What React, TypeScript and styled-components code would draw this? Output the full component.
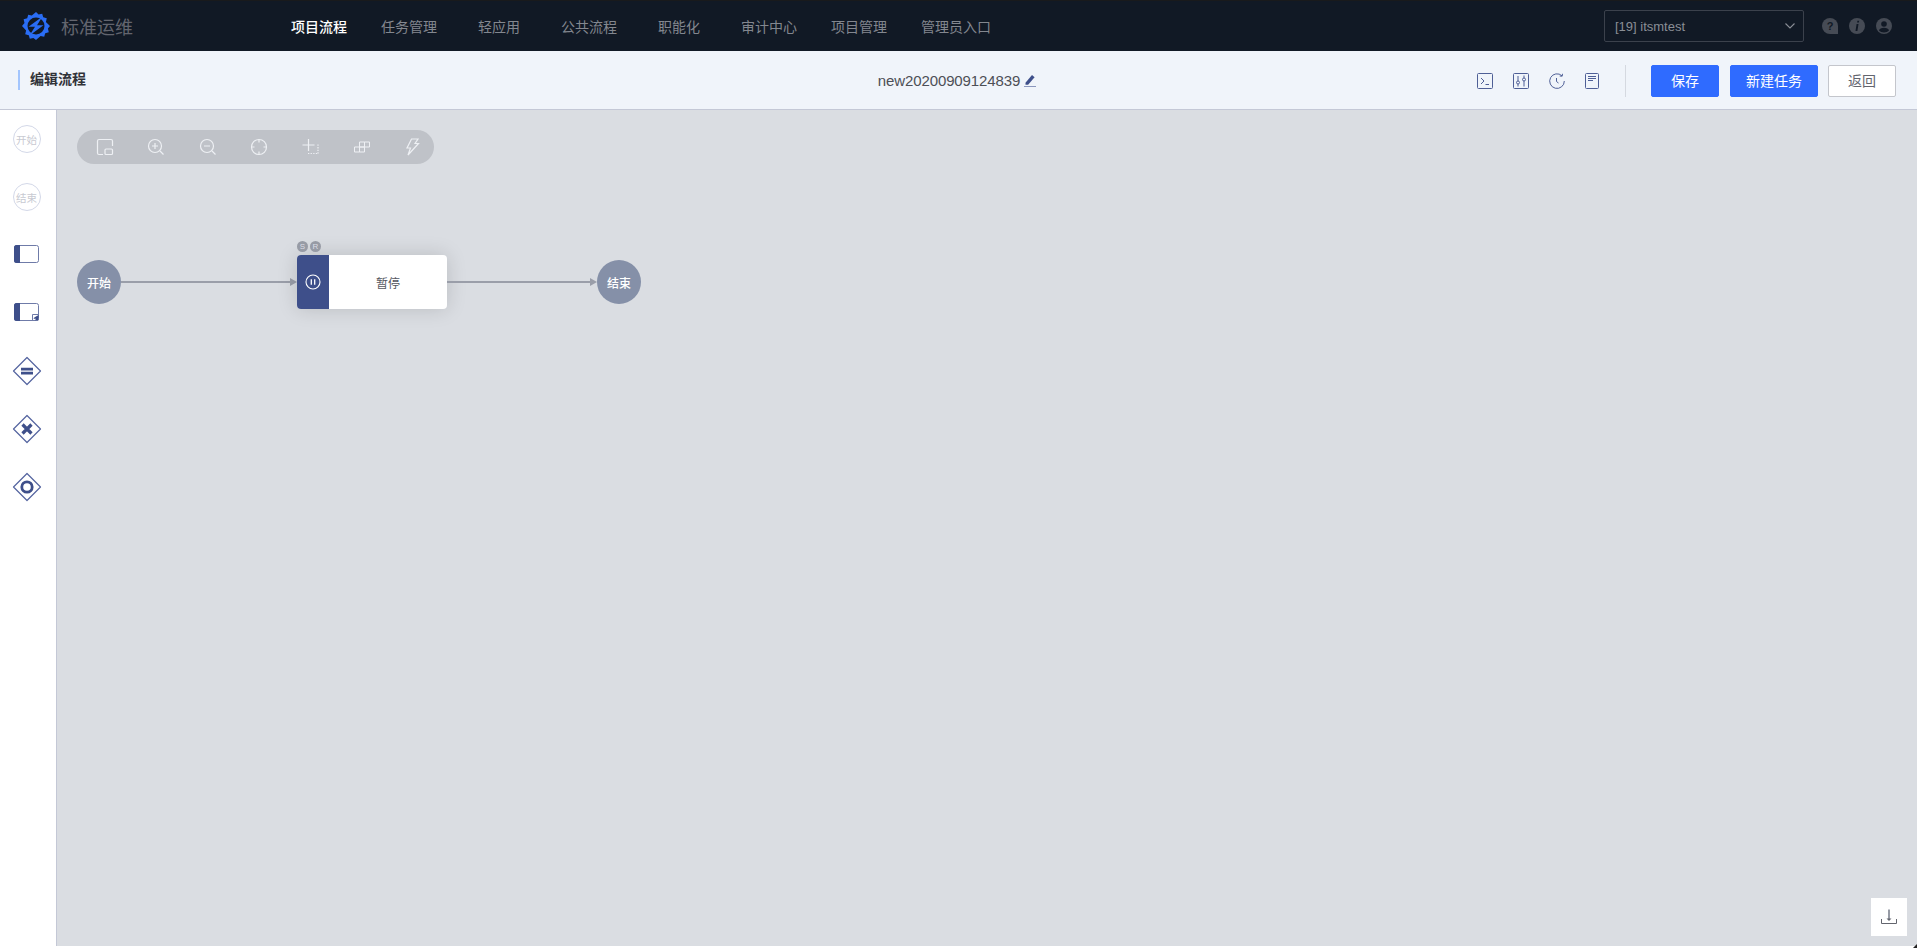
import React from "react";
import styled, { createGlobalStyle } from "styled-components";

const Global = createGlobalStyle`
  html, body { margin: 0; padding: 0; height: 100%; overflow: hidden; background: #fff; }
  #root { height: 100%; }
  * { box-sizing: border-box; }
  body { font-family: "Liberation Sans", "Noto Sans CJK SC", sans-serif; }
`;

const Page = styled.div`
  position: relative;
  width: 1917px;
  height: 948px;
  display: flex;
  flex-direction: column;
  background: #fff;
  padding-bottom: 2px;
  &::after {
    content: "";
    position: absolute;
    right: 0;
    bottom: 0;
    border-style: solid;
    border-width: 0 0 4px 4px;
    border-color: transparent transparent #222 transparent;
  }
`;
const TopBar = styled.header`
  height: 51px;
  flex: none;
  display: flex;
  align-items: center;
  background: #111925;
  border-top: 1px solid #191a1c;
  padding-left: 21px;
`;
const Brand = styled.div`
  width: 253px;
  display: flex;
  align-items: center;
  gap: 10px;
  font-size: 18px;
  color: #63656e;
`;
const Nav = styled.nav`
  display: flex;
  height: 100%;
  flex: 1;
`;
const NavItem = styled.a<{ $active?: boolean }>`
  min-width: 90px;
  padding: 0 17px;
  display: flex;
  align-items: center;
  justify-content: center;
  font-size: 14px;
  font-weight: ${(p) => (p.$active ? 500 : 400)};
  color: ${(p) => (p.$active ? "#ffffff" : "#83878f")};
`;
const ProjectSelect = styled.div`
  width: 200px;
  height: 32px;
  border: 1px solid #3b414c;
  border-radius: 2px;
  display: flex;
  align-items: center;
  justify-content: space-between;
  padding: 0 3px 0 10px;
  font-size: 13px;
  color: #8a8e96;
  font-family: "Liberation Sans", sans-serif;
`;
const HeaderIcons = styled.div`
  display: flex;
  gap: 11px;
  margin: 0 25px 0 18px;
`;
const SubBar = styled.div`
  height: 59px;
  flex: none;
  display: grid;
  grid-template-columns: 1fr auto 1fr;
  align-items: center;
  background: #f0f4fa;
  border-bottom: 1px solid #c4c8d6;
  padding: 0 21px 0 18px;
`;
const PageTitle = styled.h1`
  margin: 0;
  border-left: 2px solid #a3c5fd;
  height: 20px;
  line-height: 18px;
  padding-left: 10px;
  font-size: 14px;
  font-weight: 700;
  color: #313238;
`;
const FlowName = styled.div`
  display: flex;
  align-items: center;
  gap: 4px;
  font-size: 15px;
  letter-spacing: -0.12px;
  color: #4d4f56;
`;
const Actions = styled.div`
  display: flex;
  align-items: center;
  justify-content: flex-end;
  margin-top: 2px;
`;
const ToolIcons = styled.div`
  display: flex;
  align-items: center;
  gap: 20px;
  padding-right: 26px;
  margin-right: 25px;
  height: 32px;
  border-right: 1px solid #d5d9e0;
`;
const Button = styled.button<{ $primary?: boolean; $w: number; $gap: number }>`
  width: ${(p) => p.$w}px;
  height: 32px;
  margin-left: ${(p) => p.$gap}px;
  border-radius: 2px;
  border: 1px solid ${(p) => (p.$primary ? "#2f6bff" : "#c4c6cc")};
  background: ${(p) => (p.$primary ? "#2f6bff" : "#ffffff")};
  color: ${(p) => (p.$primary ? "#ffffff" : "#63656e")};
  font-family: inherit;
  font-size: 14px;
  padding: 0 0 2px;
`;
const Body = styled.div`
  flex: 1;
  display: flex;
  min-height: 0;
`;
const Palette = styled.aside`
  width: 57px;
  flex: none;
  background: #fff;
  border-right: 1px solid #c4c8d6;
  display: flex;
  flex-direction: column;
`;
const PaletteItem = styled.div<{ $lift?: boolean }>`
  height: 58px;
  flex: none;
  display: flex;
  align-items: center;
  justify-content: center;
  padding-right: 3px;
  padding-bottom: ${(p) => (p.$lift ? 2 : 0)}px;
`;
const EventShape = styled.div`
  width: 28px;
  height: 28px;
  border-radius: 50%;
  border: 1px solid #d3d8e8;
  display: flex;
  align-items: center;
  justify-content: center;
  font-size: 10.5px;
  color: #c8cad2;
  white-space: nowrap;
`;
const Canvas = styled.main`
  position: relative;
  flex: 1;
  background: #dadde2;
`;
const CanvasTools = styled.div`
  position: absolute;
  left: 20px;
  top: 20px;
  width: 357px;
  height: 34px;
  border-radius: 17px;
  background: #bfc2c8;
  display: flex;
  align-items: center;
  padding-left: 18px;
  gap: 31.4px;
`;
const Node = styled.div<{ $x: number }>`
  position: absolute;
  left: ${(p) => p.$x}px;
  top: 150px;
  width: 44px;
  height: 44px;
  border-radius: 50%;
  background: #8590a8;
  color: #fff;
  font-size: 12px;
  font-weight: 500;
  display: flex;
  align-items: center;
  justify-content: center;
`;
const Connector = styled.div<{ $x: number }>`
  position: absolute;
  left: ${(p) => p.$x}px;
  top: 166px;
  height: 12px;
  line-height: 0;
  svg { display: block; }
`;
const TaskNode = styled.div`
  position: absolute;
  left: 240px;
  top: 145px;
  width: 150px;
  height: 54px;
  border-radius: 4px;
  background: #fff;
  box-shadow: 0 0 20px rgba(0, 0, 0, 0.15);
  display: flex;
`;
const TaskIcon = styled.div`
  width: 32px;
  flex: none;
  background: #3e4f8a;
  border-radius: 4px 0 0 4px;
  display: flex;
  align-items: center;
  justify-content: center;
`;
const TaskLabel = styled.div`
  flex: 1;
  display: flex;
  align-items: center;
  justify-content: center;
  font-size: 12px;
  color: #55575f;
`;
const Badges = styled.div`
  position: absolute;
  left: 0;
  top: -14px;
  display: flex;
  gap: 2px;
`;
const Badge = styled.span`
  width: 11px;
  height: 11px;
  border-radius: 50%;
  background: #979ba5;
  color: #dcdee5;
  font-size: 8px;
  line-height: 11px;
  text-align: center;
`;
const Download = styled.button`
  position: absolute;
  right: 10px;
  bottom: 10px;
  width: 36px;
  height: 38px;
  border: 0;
  padding: 0;
  background: #fff;
  display: flex;
  align-items: center;
  justify-content: center;
`;

const BLUE = "#3e4f8a";
const LINE = "#4f5f96";
const WHITE = "#eef0f4";

const Logo = () => (
  <svg width="30" height="30" viewBox="0 0 30 30">
    <path
      fill="#2a6df5"
      d="M15 1l2.600 2.600 3.600-.9 1 3.600 3.600 1-.9 3.600L29 15l-2.100 2.400.9 3.800-3.600 1-1 3.600-3.600-.9L15 29l-2.600-2.100-3.600.9-1-3.600-3.600-1 .9-3.800L1 15l2.500-2.900-.9-3.800 3.600-1 1-3.600 3.600.9z"
    />
    <circle cx="15" cy="15" r="8.500" fill="#111925" />
    <path fill="#2a6df5" d="M21.500 5.500L7.500 15.800h6.500L8.500 24.500l14-10.300H16z" />
  </svg>
);
const HelpIcon = () => (
  <svg width="16" height="16" viewBox="0 0 16 16">
    <path fill="#464b55" d="M8 0a8 8 0 0 1 8 8v8H8A8 8 0 0 1 8 0z" />
    <text x="8" y="12" textAnchor="middle" fontSize="11" fontWeight="700" fill="#111925" fontFamily="Liberation Sans">?</text>
  </svg>
);
const InfoIcon = () => (
  <svg width="16" height="16" viewBox="0 0 16 16">
    <circle cx="8" cy="8" r="8" fill="#464b55" />
    <path fill="#111925" d="M8.400 2.800h1.800l-.3 1.800H8.100zM7.600 6h1.900L8.400 13H6.500z" />
  </svg>
);
const UserIcon = () => (
  <svg width="16" height="16" viewBox="0 0 16 16">
    <circle cx="8" cy="8" r="8" fill="#464b55" />
    <circle cx="8" cy="6" r="2.800" fill="#111925" />
    <path fill="#111925" d="M3 12.600C3.400 10.600 5.400 9.800 8 9.800s4.600.8 5 2.800C12 13.800 10 14.500 8 14.500s-4-.7-5-1.900z" />
  </svg>
);
const Chevron = () => (
  <svg width="20" height="20" viewBox="0 0 20 20" fill="none" stroke="#8a8e96" strokeWidth="1.100">
    <path d="M5.500 7.500L10 12l4.500-4.500" />
  </svg>
);
const Pencil = () => (
  <svg width="12" height="13" viewBox="0 0 12 13" fill={BLUE}>
    <path d="M1.500 8.800L8 1l2.600 2.200-6.500 7.600H1.500z" />
    <rect x="0" y="12" width="12" height="1" fill="#8b97bd" />
  </svg>
);
const TerminalIcon = () => (
  <svg width="16" height="16" viewBox="0 0 16 16" fill="none" stroke={LINE}>
    <rect x=".5" y=".5" width="15" height="15" rx="1" />
    <path d="M4 5l3 3-3 3M8.500 11.500H12" />
  </svg>
);
const SlidersIcon = () => (
  <svg width="16" height="16" viewBox="0 0 16 16" fill="none" stroke={LINE}>
    <rect x=".5" y=".5" width="15" height="15" rx="1" />
    <path d="M5 3v5M5 11v2.500M11 2.500V5M11 8v5.500" />
    <circle cx="5" cy="9.500" r="1.500" />
    <circle cx="11" cy="6.500" r="1.500" />
  </svg>
);
const HistoryIcon = () => (
  <svg width="16" height="16" viewBox="0 0 16 16" fill="none" stroke={LINE}>
    <path d="M13 2.800A7.300 7.300 0 1 0 15.300 8" />
    <path d="M10.700 3l2.500.2.3-2.400" />
    <path d="M7.500 5v3.500l2 1.500" />
  </svg>
);
const DocIcon = () => (
  <svg width="14" height="16" viewBox="0 0 14 16" fill="none" stroke={LINE}>
    <rect x=".5" y=".5" width="13" height="15" rx="1" />
    <path d="M3 3.500h8M3 5.500h8M3 7.500h5" strokeWidth="1.200" />
  </svg>
);
const TaskShape = ({ sub }: { sub?: boolean }) => (
  <svg width="25" height="18" viewBox="0 0 25 18" fill="none">
    <rect x=".5" y=".5" width="24" height="17" rx="2" fill="#fff" stroke="#6f7ba8" />
    <path fill={BLUE} d="M2.500 0H6v18H2.500A2.500 2.500 0 0 1 0 15.500v-13A2.500 2.500 0 0 1 2.500 0z" />
    {sub && <path d="M18.500 18v-6.500H25" stroke="#6f7ba8" />}
    {sub && <path fill={BLUE} d="M24.500 12v5a.5.5 0 0 1-.5.5h-2.500v-2l-2 .5.8-1.500z" />}
  </svg>
);
const Diamond = ({ children }: { children: React.ReactNode }) => (
  <svg width="30" height="30" viewBox="0 0 30 30" fill="none">
    <path d="M15 1.500L28.500 15 15 28.500 1.500 15z" stroke="#5565a0" strokeWidth="1.200" strokeLinejoin="round" />
    {children}
  </svg>
);
const Tool = ({ children }: { children: React.ReactNode }) => (
  <svg width="20" height="20" viewBox="0 0 20 20" fill="none" stroke={WHITE} strokeWidth="1.200" style={{ flex: "none" }}>
    {children}
  </svg>
);
const Arrow = ({ w }: { w: number }) => (
  <svg width={w} height="12" viewBox={`0 0 ${w} 12`}>
    <rect x="0" y="5" width={w - 6} height="2" fill="#9a9ea9" />
    <path d={`M${w - 7} 2l7 4-7 4z`} fill="#9a9ea9" />
  </svg>
);

const navs = ["任务管理", "轻应用", "公共流程", "职能化", "审计中心", "项目管理", "管理员入口"];

export default function App() {
  return (
    <Page>
      <Global />
      <TopBar>
        <Brand>
          <Logo />
          标准运维
        </Brand>
        <Nav>
          <NavItem $active>项目流程</NavItem>
          {navs.map((n) => (
            <NavItem key={n}>{n}</NavItem>
          ))}
        </Nav>
        <ProjectSelect>
          [19] itsmtest
          <Chevron />
        </ProjectSelect>
        <HeaderIcons>
          <HelpIcon />
          <InfoIcon />
          <UserIcon />
        </HeaderIcons>
      </TopBar>
      <SubBar>
        <PageTitle>编辑流程</PageTitle>
        <FlowName>
          new20200909124839
          <Pencil />
        </FlowName>
        <Actions>
          <ToolIcons>
            <TerminalIcon />
            <SlidersIcon />
            <HistoryIcon />
            <DocIcon />
          </ToolIcons>
          <Button $primary $w={68} $gap={0}>保存</Button>
          <Button $primary $w={88} $gap={11}>新建任务</Button>
          <Button $w={68} $gap={10}>返回</Button>
        </Actions>
      </SubBar>
      <Body>
        <Palette>
          <PaletteItem><EventShape>开始</EventShape></PaletteItem>
          <PaletteItem><EventShape>结束</EventShape></PaletteItem>
          <PaletteItem $lift><TaskShape /></PaletteItem>
          <PaletteItem $lift><TaskShape sub /></PaletteItem>
          <PaletteItem>
            <Diamond><path d="M9 11.800h12v2.700H9zM9 15.800h12v2.700H9z" fill={BLUE} /></Diamond>
          </PaletteItem>
          <PaletteItem>
            <Diamond><path d="M10.500 10.500l9 9M19.500 10.500l-9 9" stroke={BLUE} strokeWidth="3.200" /></Diamond>
          </PaletteItem>
          <PaletteItem>
            <Diamond><circle cx="15" cy="15" r="5.200" stroke={BLUE} strokeWidth="2.800" /></Diamond>
          </PaletteItem>
        </Palette>
        <Canvas>
          <CanvasTools>
            <Tool>
              <path d="M8 17.500H4a1.500 1.500 0 0 1-1.500-1.500V4A1.500 1.500 0 0 1 4 2.500h12A1.500 1.500 0 0 1 17.500 4v5" />
              <rect x="10" y="12" width="7.500" height="5.500" rx="1" />
            </Tool>
            <Tool>
              <circle cx="9" cy="9" r="6.500" />
              <path d="M14 14l3.500 3.500M6 9h6M9 6v6" />
            </Tool>
            <Tool>
              <circle cx="9" cy="9" r="6.500" />
              <path d="M14 14l3.500 3.500M6 9h6" />
            </Tool>
            <Tool>
              <circle cx="10" cy="10" r="7.500" />
              <path d="M10 2.500v3M10 14.500v3M2.500 10h3M14.500 10h3" />
            </Tool>
            <Tool>
              <path d="M1.500 8h12M7.500 2v12" />
              <path d="M7 16.500h10.500M17 7.500v9" strokeDasharray="1.300 1.300" />
            </Tool>
            <Tool>
              <path d="M2.500 10h5v5h-5zM7.500 10h5v5h-5zM7.500 5h5v5h-5zM12.500 5h5v5h-5z" strokeWidth="1" />
            </Tool>
            <Tool>
              <path d="M8.500 2H15l-3 4.500h3.500L5 18l2.500-7H4z" />
            </Tool>
          </CanvasTools>

          <Node $x={20}>开始</Node>
          <Connector $x={64}><Arrow w={176} /></Connector>
          <TaskNode>
            <Badges>
              <Badge>S</Badge>
              <Badge>R</Badge>
            </Badges>
            <TaskIcon>
              <svg width="16" height="16" viewBox="0 0 16 16" fill="none" stroke="#fff" strokeWidth="1.100">
                <circle cx="8" cy="8" r="7" />
                <path d="M6.300 5.200v5.600M9.700 5.200v5.600" strokeWidth="1.300" />
              </svg>
            </TaskIcon>
            <TaskLabel>暂停</TaskLabel>
          </TaskNode>
          <Connector $x={390}><Arrow w={150} /></Connector>
          <Node $x={540}>结束</Node>

          <Download>
            <svg width="16" height="16" viewBox="0 0 16 16" fill="none">
              <path d="M8 .5v10" stroke="#979ba5" strokeWidth="2" />
              <path d="M5.500 9.500h5L8 12z" fill="#63656e" />
              <path d="M.5 10v4.500h15V10" stroke="#63656e" />
            </svg>
          </Download>
        </Canvas>
      </Body>
    </Page>
  );
}
